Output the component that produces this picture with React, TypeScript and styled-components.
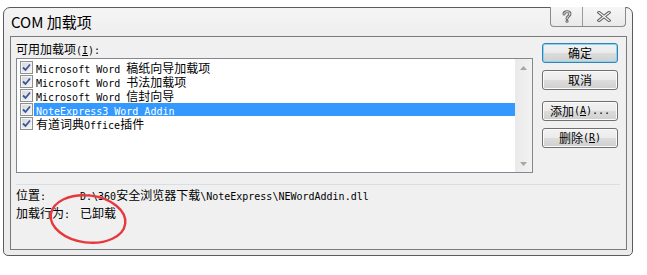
import React from 'react';
import styled, { createGlobalStyle, css } from 'styled-components';

const GlobalStyle = createGlobalStyle`
  html, body {
    margin: 0;
    padding: 0;
    background: #ffffff;
  }
  body {
    font-family: "Noto Sans CJK SC", "DejaVu Sans", sans-serif;
    font-size: 12px;
    color: #000;
  }
`;

const Page = styled.div`
  position: relative;
  width: 647px;
  height: 275px;
  padding: 7px 0 0 3px;
  box-sizing: border-box;
`;

const Window = styled.div`
  width: 630px;
  height: 249px;
  box-sizing: border-box;
  border: 1px solid #5c5c5c;
  border-radius: 7px 7px 5px 5px;
  background: linear-gradient(#f4f4f4, #ececec 40px, #ececec);
  padding: 0 5px 5px 6px;
  display: flex;
  flex-direction: column;
`;

const TitleBar = styled.div`
  height: 28px;
  display: flex;
  align-items: center;
  justify-content: space-between;
  flex-shrink: 0;
`;

const Title = styled.div`
  padding-left: 1px;
  font-size: 15px;
  line-height: 28px;
  color: #000;
`;

const CaptionGroup = styled.div`
  align-self: flex-start;
  margin-top: -1px;
  margin-right: 1px;
  display: flex;
  height: 20px;
  border: 1px solid #8a8a8a;
  border-top: none;
  border-radius: 0 0 4px 4px;
  overflow: hidden;
  background: linear-gradient(#f6f6f6, #e9e9e9);
  box-sizing: border-box;
`;

const CaptionButton = styled.div<{ $w: number; $divider?: boolean }>`
  width: ${p => p.$w}px;
  height: 100%;
  display: flex;
  align-items: center;
  justify-content: center;
  ${p => p.$divider && css`border-right: 1px solid #9a9a9a;`}
  box-sizing: border-box;
`;

const Client = styled.div`
  flex: 1;
  border: 1px solid #7a7a7a;
  background: #f0f0f0;
  padding: 5px 8px 0 5px;
  display: flex;
  flex-direction: column;
`;

const Top = styled.div`
  display: flex;
  gap: 9px;
`;

const LeftCol = styled.div`
  width: 517px;
  display: flex;
  flex-direction: column;
`;

const FieldLabel = styled.div`
  height: 14px;
  line-height: 14px;
  margin-bottom: 2px;
  white-space: nowrap;
`;

const Mono = styled.span`
  font-family: "DejaVu Sans Mono", "Liberation Mono", monospace;
  font-size: 10px;
`;

const Cjk = styled.span`
  display: inline-block;
  line-height: inherit;
`;

const Key = styled.span`
  text-decoration: underline;
  text-underline-offset: 1px;
`;

const ListBox = styled.div`
  height: 115px;
  box-sizing: border-box;
  border: 1px solid #828790;
  background: #fff;
  display: flex;
`;

const Items = styled.div`
  flex: 1;
  padding-top: 1px;
  display: flex;
  flex-direction: column;
`;

const Row = styled.div`
  height: 14px;
  display: flex;
  align-items: center;
  padding-left: 3px;
`;

const Check = styled.span`
  width: 13px;
  height: 13px;
  box-sizing: border-box;
  border: 1px solid #8e8f8f;
  background: linear-gradient(135deg, #d4d6d9, #f6f6f6);
  box-shadow: inset 0 0 0 1px #f4f4f4;
  display: flex;
  align-items: center;
  justify-content: center;
  flex-shrink: 0;
`;

const ItemText = styled.span<{ $selected?: boolean }>`
  flex: 1;
  margin-left: 1px;
  padding-left: 2px;
  height: 13px;
  line-height: 13px;
  white-space: nowrap;
  background: ${p => (p.$selected ? '#3399ff' : 'transparent')};
  color: ${p => (p.$selected ? '#fff' : '#000')};
`;

const ScrollBar = styled.div`
  width: 17px;
  background: linear-gradient(90deg, #eaeaea, #f2f2f2);
  display: flex;
  flex-direction: column;
  justify-content: space-between;
  align-items: center;
  padding: 7px 0 6px;
  box-sizing: border-box;
`;

const ButtonCol = styled.div`
  width: 76px;
  margin-top: 1px;
  display: flex;
  flex-direction: column;
`;

const Button = styled.div<{ $default?: boolean; $gap: number }>`
  height: 20px;
  margin-top: ${p => p.$gap}px;
  box-sizing: border-box;
  border: 1px solid ${p => (p.$default ? '#3c7fb1' : '#707070')};
  border-radius: 3px;
  background: linear-gradient(#f2f2f2 0%, #ebebeb 50%, #dddddd 50%, #cfcfcf 100%);
  box-shadow: inset 0 0 0 1px ${p => (p.$default ? '#7fd8f8' : '#fbfbfb')};
  display: flex;
  align-items: center;
  justify-content: center;
  line-height: 18px;
  white-space: nowrap;
`;

const Separator = styled.div`
  height: 1px;
  background: #d6dfe6;
  margin: 11px -2px 0 0;
`;

const InfoRow = styled.div<{ $first?: boolean }>`
  display: flex;
  height: 18px;
  line-height: 18px;
  margin-top: ${p => (p.$first ? 1 : 0)}px;
  white-space: nowrap;
`;

const InfoLabel = styled.div`
  width: 64px;
`;

const Annotation = styled.svg`
  position: absolute;
  left: 44px;
  top: 190px;
  overflow: visible;
  pointer-events: none;
`;

type Seg = { t: string; mono?: boolean };

const items: { segs: Seg[]; selected?: boolean }[] = [
  { segs: [{ t: 'Microsoft Word ', mono: true }, { t: '稿纸向导加载项' }] },
  { segs: [{ t: 'Microsoft Word ', mono: true }, { t: '书法加载项' }] },
  { segs: [{ t: 'Microsoft Word ', mono: true }, { t: '信封向导' }] },
  { segs: [{ t: 'NoteExpress3 Word Addin', mono: true }], selected: true },
  { segs: [{ t: '有道词典' }, { t: 'Office', mono: true }, { t: '插件' }] },
];

const Segs: React.FC<{ segs: Seg[] }> = ({ segs }) => (
  <>
    {segs.map((s, i) => (s.mono ? <Mono key={i}>{s.t}</Mono> : <Cjk key={i}>{s.t}</Cjk>))}
  </>
);

const CheckMark = () => (
  <svg width="9" height="9" viewBox="0 0 9 9">
    <path d="M1 4.5 L3.5 7 L8 1.5" fill="none" stroke="#3a559a" strokeWidth="1.8" />
  </svg>
);

const App: React.FC = () => (
  <Page>
    <GlobalStyle />
    <Window>
      <TitleBar>
        <Title>COM 加载项</Title>
        <CaptionGroup>
          <CaptionButton $w={32} $divider>
            <svg width="10" height="13" viewBox="0 0 10 13">
              <path d="M2 4 C2 1 8 1 8 4 C8 6 5 6 5 8.5" fill="none" stroke="#6b6b6b" strokeWidth="3" strokeLinecap="round" />
              <circle cx="5" cy="11.3" r="1.5" fill="#6b6b6b" />
              <path d="M2 4 C2 1 8 1 8 4 C8 6 5 6 5 8.5" fill="none" stroke="#f4f4f4" strokeWidth="1" strokeLinecap="round" />
              <circle cx="5" cy="11.3" r="0.5" fill="#f4f4f4" />
            </svg>
          </CaptionButton>
          <CaptionButton $w={42}>
            <svg width="14" height="11" viewBox="0 0 14 11">
              <path d="M2 1.5 L12 9.5 M12 1.5 L2 9.5" stroke="#6b6b6b" strokeWidth="3.4" strokeLinecap="square" />
              <path d="M2 1.5 L12 9.5 M12 1.5 L2 9.5" stroke="#f4f4f4" strokeWidth="1.2" strokeLinecap="square" />
            </svg>
          </CaptionButton>
        </CaptionGroup>
      </TitleBar>
      <Client>
        <Top>
          <LeftCol>
            <FieldLabel>
              可用加载项<Mono>(<Key>I</Key>):</Mono>
            </FieldLabel>
            <ListBox>
              <Items>
                {items.map((it, i) => (
                  <Row key={i}>
                    <Check>
                      <CheckMark />
                    </Check>
                    <ItemText $selected={it.selected}>
                      <Segs segs={it.segs} />
                    </ItemText>
                  </Row>
                ))}
              </Items>
              <ScrollBar>
                <svg width="7" height="4" viewBox="0 0 7 4">
                  <path d="M0 4 L3.5 0 L7 4 Z" fill="#a6a6a6" />
                </svg>
                <svg width="7" height="4" viewBox="0 0 7 4">
                  <path d="M0 0 L3.5 4 L7 0 Z" fill="#a6a6a6" />
                </svg>
              </ScrollBar>
            </ListBox>
          </LeftCol>
          <ButtonCol>
            <Button $default $gap={0}>确定</Button>
            <Button $gap={7}>取消</Button>
            <Button $gap={11}>
              添加<Mono>(<Key>A</Key>)...</Mono>
            </Button>
            <Button $gap={7}>
              删除<Mono>(<Key>R</Key>)</Mono>
            </Button>
          </ButtonCol>
        </Top>
        <Separator />
        <InfoRow $first>
          <InfoLabel>
            位置<Mono>:</Mono>
          </InfoLabel>
          <div>
            <Segs
              segs={[
                { t: 'D:\\360', mono: true },
                { t: '安全浏览器下载' },
                { t: '\\NoteExpress\\NEWordAddin.dll', mono: true },
              ]}
            />
          </div>
        </InfoRow>
        <InfoRow>
          <InfoLabel>
            加载行为<Mono>:</Mono>
          </InfoLabel>
          <div>已卸载</div>
        </InfoRow>
      </Client>
    </Window>
    <Annotation width="90" height="60" viewBox="0 0 90 60">
      <ellipse cx="44" cy="29" rx="37.5" ry="23.5" fill="none" stroke="#e8383d" strokeWidth="2.4" transform="rotate(7 44 29)" />
    </Annotation>
  </Page>
);

export default App;
